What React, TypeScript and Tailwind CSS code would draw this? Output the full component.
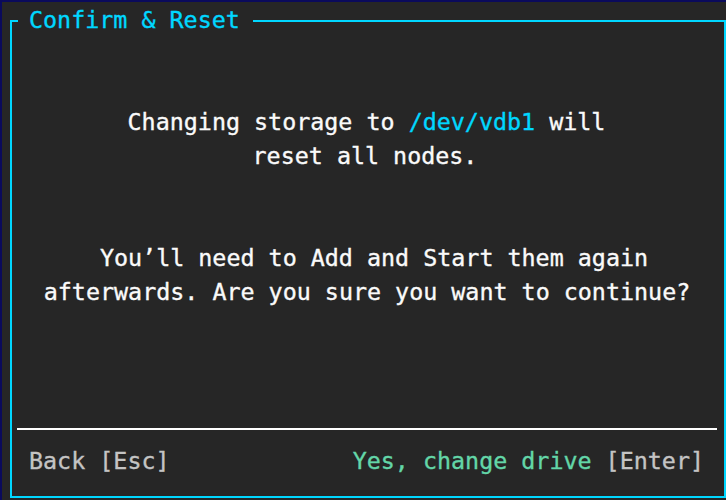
import React from "react";

export default function App() {
  const mono = { fontFamily: '"DejaVu Sans Mono", "Liberation Mono", monospace' };
  return (
    <div
      className="w-[726px] h-[500px] bg-[#262626] border-t-2 border-l-2 border-[#0a0a5c] flex flex-col pl-[8px] pb-[2px] text-[23.35px] leading-[34px] overflow-hidden [-webkit-text-stroke:0.35px]"
      style={mono}
    >
      {/* header row with title on the border */}
      <div className="h-[35px] flex items-end shrink-0">
        <div className="w-[8px] h-[17px] border-l-2 border-t-2 border-[#00d7ff]" />
        <div className="h-[34px] flex items-center pl-[11px] pr-[13px] text-[#00d7ff] whitespace-pre">
          <span>Confirm &amp; Reset</span>
        </div>
        <div className="flex-1 h-[17px] border-t-2 border-r-2 border-[#00d7ff]" />
      </div>
      {/* body */}
      <div className="flex-1 border-l-2 border-r-2 border-b-2 border-[#00d7ff] flex flex-col text-[#fafafa] whitespace-pre">
        <div className="h-[68px]" />
        <div className="text-center pr-[3px]">
          Changing storage to <span className="text-[#00d7ff]">/dev/vdb1</span> will
        </div>
        <div className="text-center pr-[6px]">reset all nodes.</div>
        <div className="h-[68px]" />
        <div className="text-center pl-[12px]">You’ll need to Add and Start them again</div>
        <div className="text-center pr-[2px]">afterwards. Are you sure you want to continue?</div>
        <div className="flex-1" />
        <div className="h-[34px] flex items-center pl-[5px] pr-[7px]">
          <div className="h-[2px] w-full bg-white mt-[4px]" />
        </div>
        <div className="h-[34px] flex items-center justify-between pl-[17px] pr-[20px] text-[#c4c4c4]">
          <span>Back [Esc]</span>
          <span>
            <span className="text-[#63d6a8]">Yes, change drive</span> [Enter]
          </span>
        </div>
        <div className="h-[18px]" />
      </div>
    </div>
  );
}
